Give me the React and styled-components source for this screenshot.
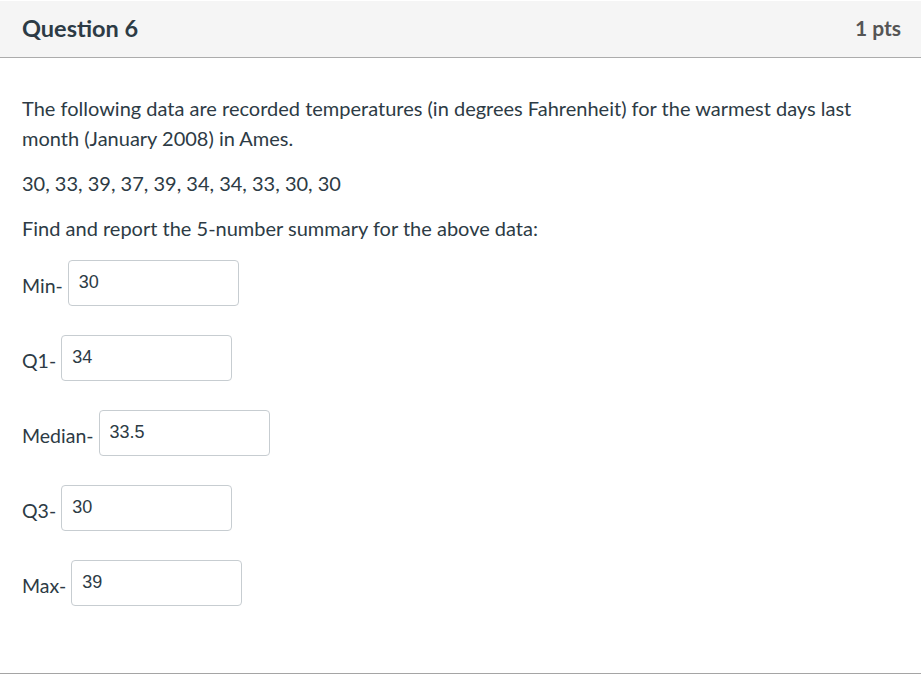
import React from 'react';
import styled, { createGlobalStyle } from 'styled-components';

const GlobalStyle = createGlobalStyle`
  html, body {
    margin: 0;
    padding: 0;
    background: #fff;
  }
  body {
    font-family: Lato, "Noto Sans", sans-serif;
    color: #2d3b45;
  }
`;

const Card = styled.section`
  margin-top: 1px;
  border-bottom: 1px solid #a5a5a5;
`;

const Header = styled.header`
  display: flex;
  align-items: center;
  justify-content: space-between;
  box-sizing: border-box;
  height: 57px;
  padding: 0 20px 3px 22px;
  background: #f5f5f5;
  border-bottom: 1px solid #acacac;
`;

const Title = styled.h2`
  margin: 0;
  font-size: 23.5px;
  font-weight: 700;
  color: #2d3b45;
`;

const Points = styled.div`
  font-size: 21px;
  font-weight: 700;
  color: #555;
`;

const Body = styled.div`
  padding: 35px 22px 67px;
`;

const Text = styled.p`
  margin: 0 0 15px;
  font-size: 20px;
  line-height: 30px;
  color: #2d3b45;
`;

const Answers = styled.div`
  display: flex;
  flex-direction: column;
  gap: 29px;
  margin-top: 17px;
`;

const Row = styled.label`
  display: flex;
  align-items: center;
  gap: 5px;
`;

const Label = styled.span`
  font-size: 19.5px;
  line-height: 24px;
  padding-top: 5px;
  color: #2d3b45;
`;

const Field = styled.input`
  box-sizing: border-box;
  width: 171px;
  height: 46px;
  padding: 12px 10px 14px;
  border: 1px solid #c7cdd1;
  border-radius: 4px;
  background: #fff;
  font-family: "Liberation Sans", Arial, sans-serif;
  font-size: 18px;
  line-height: 20px;
  color: #2d3b45;
  outline: none;
`;

const answers = [
  { label: 'Min-', value: '30' },
  { label: 'Q1-', value: '34' },
  { label: 'Median-', value: '33.5' },
  { label: 'Q3-', value: '30' },
  { label: 'Max-', value: '39' },
];

export default function App() {
  return (
    <>
      <GlobalStyle />
      <Card>
        <Header>
          <Title>Question 6</Title>
          <Points>1 pts</Points>
        </Header>
        <Body>
          <Text>
            The following data are recorded temperatures (in degrees Fahrenheit) for the warmest days last
            month (January 2008) in Ames.
          </Text>
          <Text>30, 33, 39, 37, 39, 34, 34, 33, 30, 30</Text>
          <Text>Find and report the 5-number summary for the above data:</Text>
          <Answers>
            {answers.map((a) => (
              <Row key={a.label}>
                <Label>{a.label}</Label>
                <Field type="text" defaultValue={a.value} />
              </Row>
            ))}
          </Answers>
        </Body>
      </Card>
    </>
  );
}
